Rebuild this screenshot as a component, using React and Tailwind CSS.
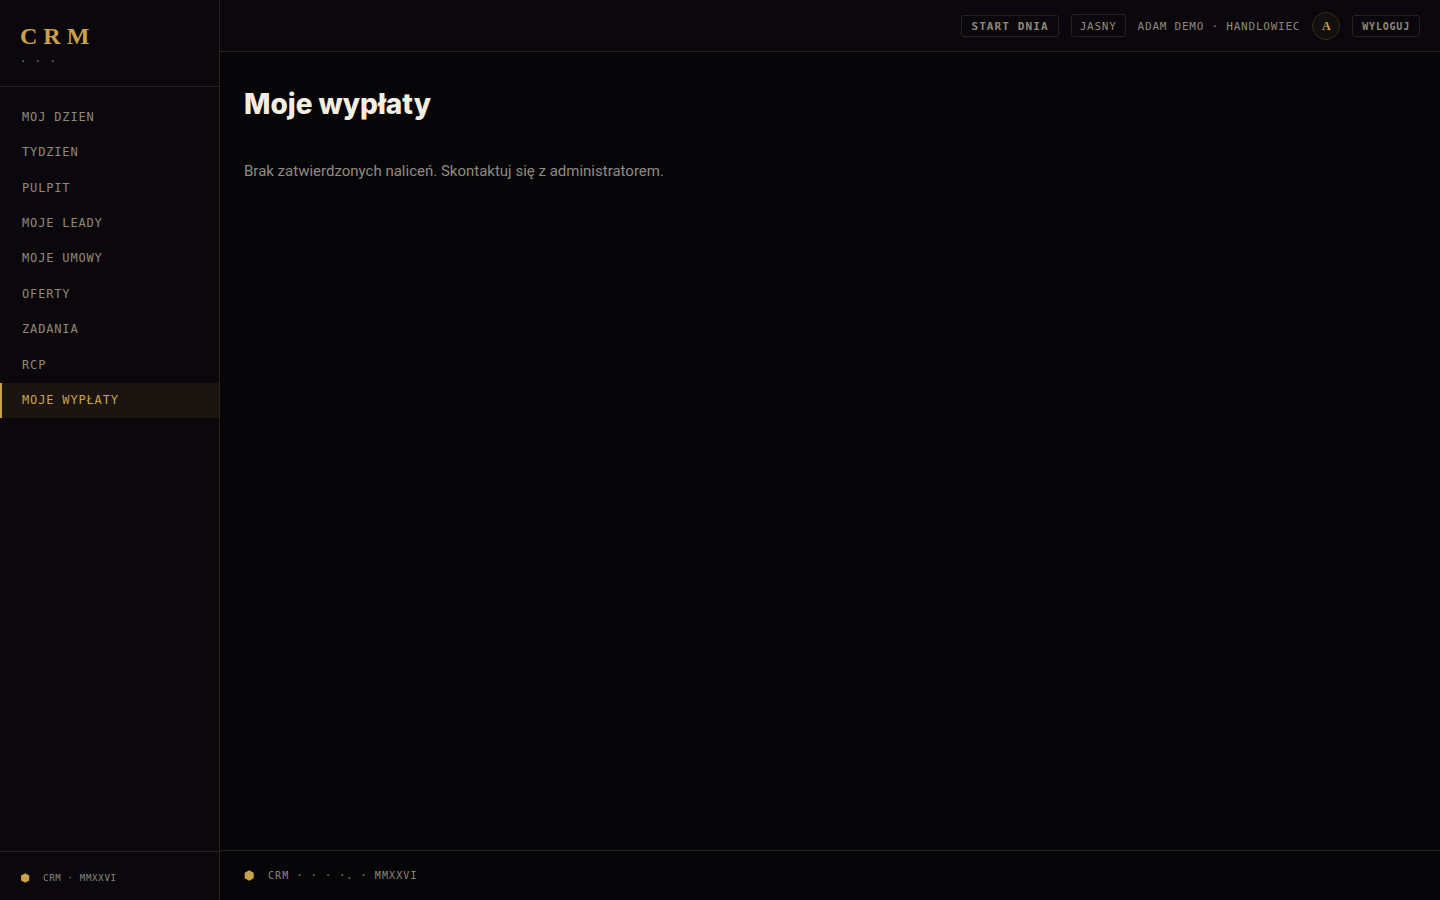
import React from 'react';

const navItems = [
  { label: 'Moj dzien', href: '#moj-dzien' },
  { label: 'Tydzien', href: '#tydzien' },
  { label: 'Pulpit', href: '#pulpit' },
  { label: 'Moje leady', href: '#moje-leady' },
  { label: 'Moje umowy', href: '#moje-umowy' },
  { label: 'Oferty', href: '#oferty' },
  { label: 'Zadania', href: '#zadania' },
  { label: 'RCP', href: '#rcp' },
  { label: 'Moje wypłaty', href: '#moje-wyplaty', active: true },
];

function Hexagon({ className }) {
  return (
    <svg viewBox="0 0 10 11" className={className} fill="#c9a24a" aria-hidden="true">
      <path d="M5.2 0.2 L9.7 2.8 V8.2 L5.2 10.8 L0.7 8.2 V2.8 Z" />
    </svg>
  );
}

function Sidebar() {
  return (
    <aside className="w-[220px] shrink-0 flex flex-col bg-[#0a080d] border-r border-[#292119]">
      <div className="h-[87px] px-5 pt-5 border-b border-[#292119]">
        <div className="font-['Liberation_Serif',serif] text-2xl leading-8 font-bold tracking-[6px] text-[#c9a24a]">
          CRM
        </div>
        <div className="text-[10px] leading-5 tracking-[0.14em]">· · ·</div>
      </div>

      <nav className="pt-3 grow">
        <ul className="grid auto-rows-fr h-[319px]">
          {navItems.map((item) => (
            <li key={item.label} className="flex">
              <a
                href={item.href}
                aria-current={item.active ? 'page' : undefined}
                className={
                  item.active
                    ? 'grow flex items-center pl-5 border-l-2 border-[#c9a24a] bg-[#1b1511] text-[#c9a24a] text-xs tracking-[0.07em] uppercase'
                    : 'grow flex items-center pl-5 border-l-2 border-transparent text-xs tracking-[0.07em] uppercase hover:text-[#c9a24a]'
                }
              >
                {item.label}
              </a>
            </li>
          ))}
        </ul>
      </nav>

      <div className="h-[49px] px-5 pt-1 flex items-center gap-[13px] border-t border-[#292119] text-[9px] leading-4 tracking-[0.08em]">
        <Hexagon className="w-[10px] h-[10px]" />
        <span>CRM · MMXXVI</span>
      </div>
    </aside>
  );
}

function Topbar() {
  return (
    <header className="h-[52px] px-5 flex items-center justify-end gap-3 bg-[#0a080d] border-b border-[#292119]">
      <button
        type="button"
        className="h-[22px] px-[9px] pt-0.5 border border-[#292119] rounded-[3px] text-[11px] leading-4 font-bold tracking-widest uppercase cursor-pointer"
      >
        Start dnia
      </button>
      <button
        type="button"
        className="h-[23px] px-2 pt-0.5 border border-[#292119] rounded-[3px] text-[11px] leading-4 tracking-[0.07em] uppercase cursor-pointer"
      >
        Jasny
      </button>
      <span className="pt-0.5 text-[11px] leading-4 tracking-[0.07em] uppercase">Adam Demo · Handlowiec</span>
      <div className="w-7 h-7 flex items-center justify-center rounded-full border border-[#352a18] bg-[#12100e] font-['Liberation_Serif',serif] text-xs font-bold text-[#c9a24a]">
        A
      </div>
      <button
        type="button"
        className="h-[22px] px-[9px] pt-0.5 border border-[#292119] rounded-[3px] text-[10px] leading-4 font-bold tracking-[0.08em] uppercase cursor-pointer"
      >
        Wyloguj
      </button>
    </header>
  );
}

export default function App() {
  return (
    <div className="min-h-screen flex bg-[#060608] font-['DejaVu_Sans_Mono',monospace] text-[#8f8878]">
      <Sidebar />
      <div className="grow min-w-0 flex flex-col">
        <Topbar />
        <main className="grow px-6 pt-8">
          <h1 className="font-['Inter',sans-serif] text-[28px] leading-10 font-extrabold text-[#f2eee0]">Moje wypłaty</h1>
          <p className="mt-[35px] font-['Roboto',sans-serif] text-[15px] leading-6 text-[#8f8b82]">
            Brak zatwierdzonych naliceń. Skontaktuj się z administratorem.
          </p>
        </main>
        <footer className="h-[50px] px-6 flex items-center gap-[14px] border-t border-[#292119] text-[10px] tracking-[0.11em]">
          <Hexagon className="w-[10px] h-[11px]" />
          <span>CRM · · · ·. · MMXXVI</span>
        </footer>
      </div>
    </div>
  );
}
